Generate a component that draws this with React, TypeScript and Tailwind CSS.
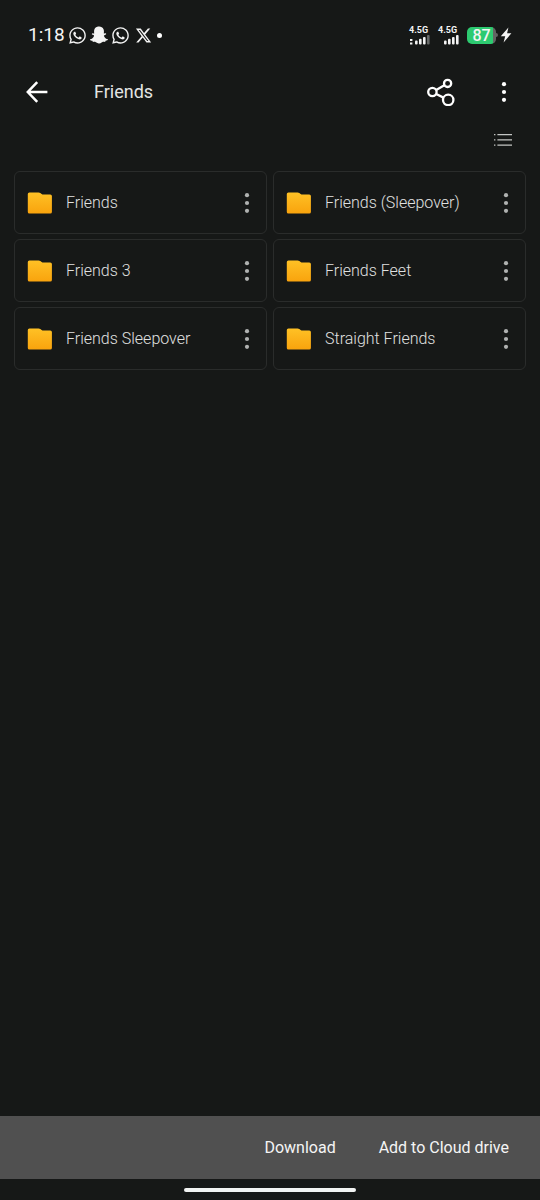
import { FaSnapchatGhost, FaWhatsapp } from 'react-icons/fa';
import { FaXTwitter } from 'react-icons/fa6';

const folders = [
  'Friends',
  'Friends (Sleepover)',
  'Friends 3',
  'Friends Feet',
  'Friends Sleepover',
  'Straight Friends'
];

function Dots() {
  return (
    <svg width="6" height="20" viewBox="0 0 6 20" fill="currentColor">
      <circle cx="3" cy="2.2" r="2.1" />
      <circle cx="3" cy="10" r="2.1" />
      <circle cx="3" cy="17.8" r="2.1" />
    </svg>
  );
}

function FolderIcon() {
  return (
    <svg width="26" height="24" viewBox="0 0 26 24" className="shrink-0">
      <defs>
        <linearGradient id="folder" x1="0" y1="0" x2="0" y2="1">
          <stop offset="0" stopColor="#ffc125" />
          <stop offset="1" stopColor="#f9a30d" />
        </linearGradient>
      </defs>
      <path
        d="M2.4 1.5H11.6Q12.5 1.5 13.3 2L14.6 2.9Q15.4 3.4 16.4 3.4H23.2Q24.9 3.4 24.9 5.1V20.9Q24.9 22.5 23.2 22.5H2.4Q.8 22.5 .8 20.9V3.1Q.8 1.5 2.4 1.5Z"
        fill="url(#folder)"
      />
    </svg>
  );
}

function Signal({ weak = false }: { weak?: boolean }) {
  return (
    <div className="flex w-[21px] flex-col items-start">
      <span className="text-[9px] leading-[9px] font-bold">4.5G</span>
      <svg width="21" height="10" viewBox="0 0 21 10" fill="currentColor">
        {weak && <path d="M1 4h2.4v2H1zM1 7.4h2.4v2H1z" />}
        <rect x="6" y="5.6" width="2.6" height="4" rx="1" />
        <rect x="10" y="3.8" width="2.6" height="5.8" rx="1" />
        <rect x="14" y="2" width="2.6" height="7.6" rx="1" />
        <rect x="18" y="0" width="2.6" height="9.6" rx="1" fill={weak ? '#686a69' : 'currentColor'} />
      </svg>
    </div>
  );
}

function StatusBar() {
  return (
    <div className="flex h-[70px] items-center justify-between px-7 text-[#f4f4f4]">
      <div className="flex items-center gap-[3px]">
        <span className="text-[19px] leading-6">1:18</span>
        <FaWhatsapp size={19} />
        <FaSnapchatGhost size={18} />
        <FaWhatsapp size={19} />
        <FaXTwitter size={17} className="ml-[2px]" />
        <span className="ml-[2px] size-[5px] rounded-full bg-white" />
      </div>
      <div className="flex items-center gap-2">
        <Signal weak />
        <Signal />
        <div className="flex items-center">
          <div className="flex h-[17px] w-[29px] items-center justify-center rounded-[5px] bg-linear-to-r from-[#2dca70] from-88% to-[#626463] to-88% text-base leading-[17px] font-medium">
            87
          </div>
          <span className="h-1 w-[2px] rounded-r-sm bg-[#626463]" />
          <svg width="12" height="16" viewBox="0 0 12 16" fill="currentColor" className="ml-[2px]">
            <path d="M8.4.4.8 9.2h4.4L3.6 15.6 11.4 6.3H7.1Z" />
          </svg>
        </div>
      </div>
    </div>
  );
}

export default function App() {
  return (
    <div className="flex min-h-screen flex-col bg-[#161817] font-['Roboto',sans-serif]">
      <StatusBar />

      <header className="flex h-11 items-center pr-[33px] pl-[26px] text-white">
        <button aria-label="Back">
          <svg width="22" height="22" viewBox="0 0 22 22" fill="none" stroke="currentColor" strokeWidth="2.5">
            <path d="M11.2 1.2 1.8 11l9.4 9.8M1.8 11H21.4" />
          </svg>
        </button>
        <h1 className="ml-[46px] flex-1 text-lg text-[#e4e5e4]">Friends</h1>
        <button aria-label="Share">
          <svg width="28" height="28" viewBox="0 0 28 28" fill="none" stroke="currentColor" strokeWidth="2.3">
            <circle cx="5.4" cy="14" r="4.2" />
            <circle cx="20.6" cy="5.4" r="3.6" />
            <circle cx="21.2" cy="21.9" r="5.2" />
            <path d="M9.2 12 17.3 7.3M9.2 16 16.5 19.6" />
          </svg>
        </button>
        <button aria-label="More options" className="ml-[46px]">
          <Dots />
        </button>
      </header>

      <div className="flex h-[52px] items-center justify-end pr-7 text-[#c3c5c4]">
        <button aria-label="List view">
          <svg width="18" height="14" viewBox="0 0 18 14" fill="currentColor">
            <path d="M0 1h1.4v1.2H0zM3.4 1H18v1.2H3.4zM0 6.3h1.4v1.2H0zM3.4 6.3H18v1.2H3.4zM0 11.6h1.4v1.2H0zM3.4 11.6H18v1.2H3.4z" />
          </svg>
        </button>
      </div>

      <main className="grid grid-cols-2 gap-x-[6px] gap-y-[5px] px-[14px] pt-[5px]">
        {folders.map((name) => (
          <div key={name} className="flex h-[63px] items-center rounded-md border border-[#2a2c2b] pr-4 pl-3">
            <FolderIcon />
            <span className="ml-[13px] flex-1 text-base font-light text-[#e0e1e0]">{name}</span>
            <button aria-label={`Options for ${name}`} className="text-[#b0b2b1]">
              <Dots />
            </button>
          </div>
        ))}
      </main>

      <footer className="mt-auto">
        <div className="flex h-[63px] items-center justify-end gap-[43px] bg-[#505050] pr-[31px] text-base text-[#f5f5f5]">
          <button>Download</button>
          <button>Add to Cloud drive</button>
        </div>
        <div className="flex h-[21px] items-center justify-center">
          <span className="h-1 w-[172px] rounded-full bg-[#f1f3f2]" />
        </div>
      </footer>
    </div>
  );
}
